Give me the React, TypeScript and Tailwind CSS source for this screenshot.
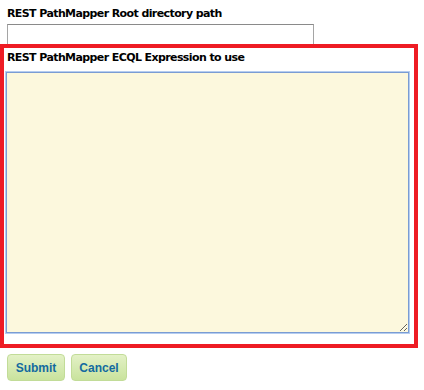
export default function App() {
  return (
    <div className="w-[424px] h-[390px] bg-white font-['Liberation_Sans',Arial,sans-serif]">
      <div className="pt-[7px] pl-[7px] text-[11px] font-bold text-black leading-[14px] font-['DejaVu_Sans',Verdana,sans-serif] tracking-[-0.6px]">
        REST PathMapper Root directory path
      </div>
      <div className="ml-[7px] mt-[3px] w-[307px] h-[20px] border border-b-0 border-[#a5a5a5] border-t-[#8a8a8a] bg-white" />
      <div className="w-[418px] h-[304px] border-[4px] border-[#ee1c24] flex flex-col">
        <div className="pt-[3px] pl-[3px] text-[11px] font-bold text-black leading-[14px] font-['DejaVu_Sans',Verdana,sans-serif] tracking-[-0.6px]">
          REST PathMapper ECQL Expression to use
        </div>
        <textarea className="ml-[2px] mt-[7px] w-[403px] h-[261px] bg-[#fcf8dd] border border-[#7a9cd3] outline outline-1 outline-[#b5cdf0] resize" />
      </div>
      <div className="flex gap-[6px] pl-[7px] mt-[6px]">
        <button className="w-[58px] h-[27px] rounded-[4px] border border-[#c2dc98] bg-gradient-to-b from-[#e3f1c6] to-[#c9e39d] text-[12px] font-bold text-[#136aa0] font-['Liberation_Sans',Arial,sans-serif]">
          Submit
        </button>
        <button className="w-[56px] h-[27px] rounded-[4px] border border-[#c2dc98] bg-gradient-to-b from-[#e3f1c6] to-[#c9e39d] text-[12px] font-bold text-[#136aa0] font-['Liberation_Sans',Arial,sans-serif]">
          Cancel
        </button>
      </div>
    </div>
  );
}
